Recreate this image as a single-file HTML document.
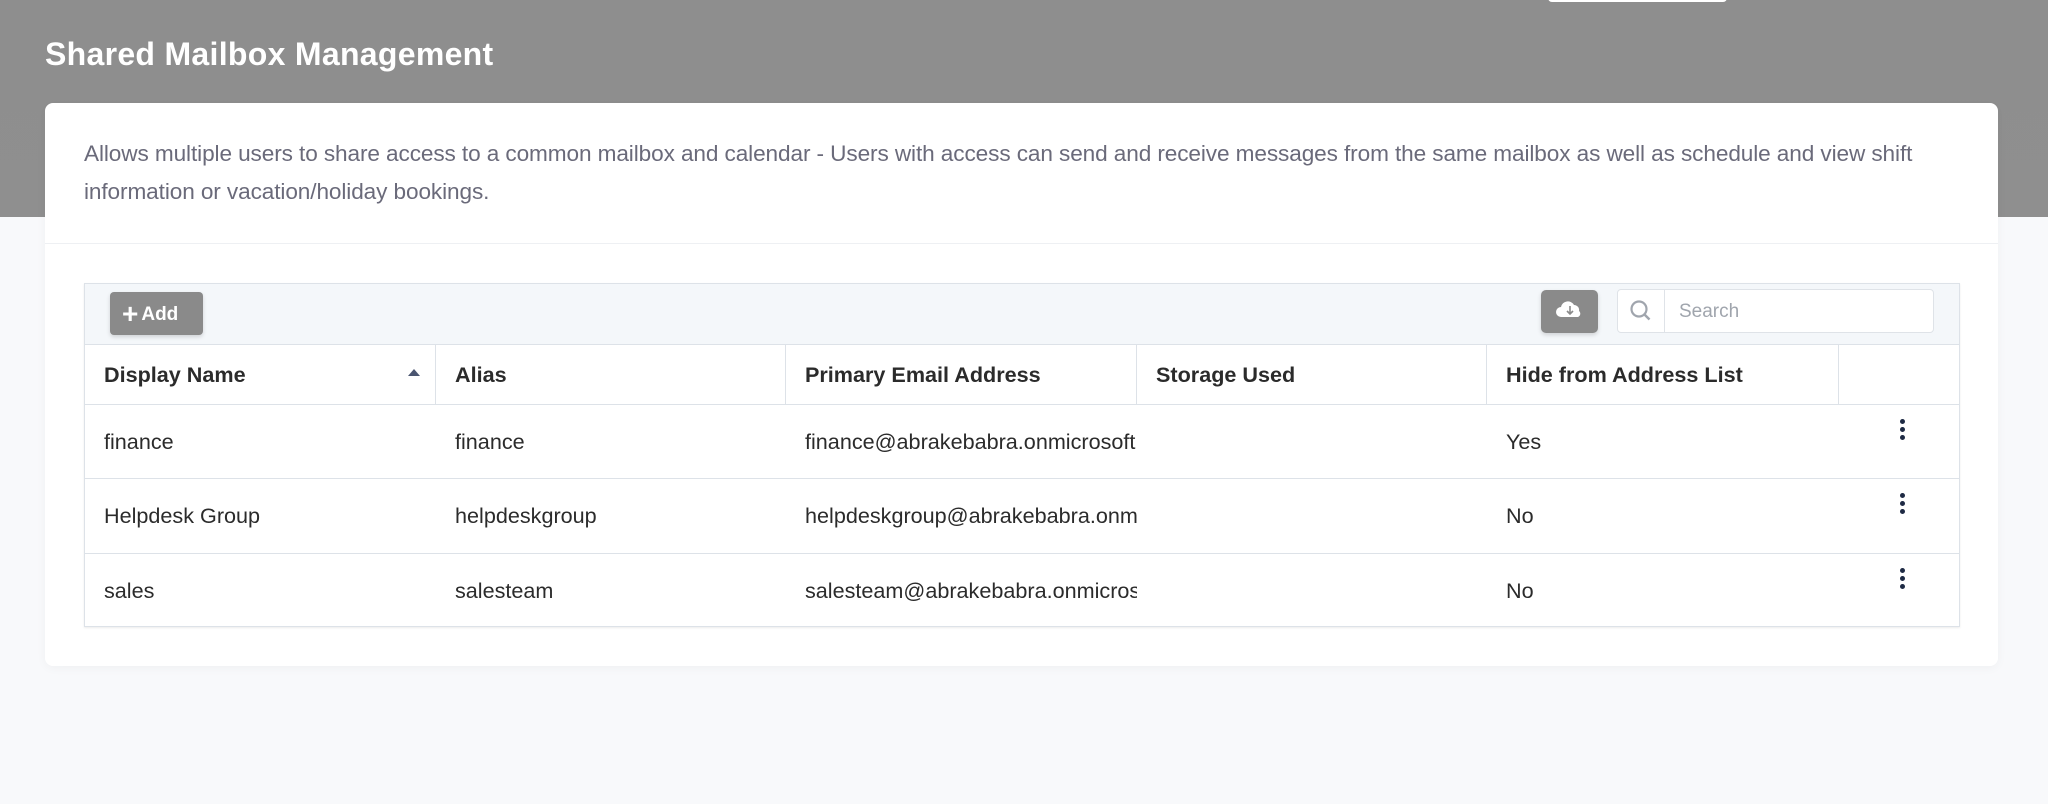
<!DOCTYPE html>
<html><head><meta charset="utf-8"><style>
*{box-sizing:border-box;margin:0;padding:0}
body{width:2048px;height:804px;background:#f8f9fb;font-family:"Liberation Sans",sans-serif;position:relative;overflow:hidden}
.hdr{position:absolute;left:0;top:0;width:2048px;height:217px;background:linear-gradient(#8e8e8e,#8f8f8f)}
.topw{position:absolute;left:1548px;top:-6px;width:179px;height:8px;background:#fff;border-radius:4px}
h1{position:absolute;left:45px;top:36px;color:#fff;font-size:32px;font-weight:bold;letter-spacing:0.3px}
.card{position:absolute;left:45px;top:103px;width:1953px;height:563px;background:#fff;border-radius:8px;box-shadow:0 2px 10px rgba(0,0,0,.04)}
.desc{position:absolute;left:39px;top:32px;width:1880px;color:#6a6a7a;font-size:22.6px;line-height:38px;font-weight:300;letter-spacing:-0.1px}
.div{position:absolute;left:0;top:140px;width:1953px;height:1px;background:#eef0f3}
.tbl{position:absolute;left:39px;top:180px;width:1876px;height:344px;border:1px solid #dde2e8;box-shadow:0 1px 2px rgba(0,0,0,.08)}
.tb{position:absolute;left:0;top:0;width:100%;height:61px;background:#f4f7fa;border-bottom:1px solid #dde2e8}
.add{position:absolute;left:25px;top:8px;width:93px;height:43px;background:#8a8a8a;border-radius:4px;color:#fff;font-weight:bold;font-size:19px;line-height:43px;padding-left:12px;box-shadow:0 2px 4px rgba(0,0,0,.15)}
.add b{font-size:28px;vertical-align:-3px;margin-right:3px;font-weight:bold}
.cl{position:absolute;left:1456px;top:6px;width:57px;height:43px;background:#8a8a8a;border-radius:5px;box-shadow:0 2px 4px rgba(0,0,0,.15)}
.srch{position:absolute;left:1532px;top:5px;width:317px;height:44px;background:#fff;border:1px solid #dfe3e8;border-radius:4px}
.srch .ic{position:absolute;left:0;top:0;width:47px;height:42px;border-right:1px solid #dfe3e8}
.srch span{position:absolute;left:61px;top:11px;color:#a0a5ad;font-size:19px}
.row{position:absolute;left:0;width:100%;border-bottom:1px solid #dde2e8}
.c{position:absolute;top:0;height:100%;font-size:21.6px;color:#2b2b2b;padding-left:19px;display:flex;align-items:center;white-space:nowrap;overflow:hidden}
.h .c{font-weight:bold;border-right:1px solid #dde2e8}
.k{position:absolute;left:1815px;width:6px}
.k i{display:block;width:5px;height:5px;border-radius:50%;background:#1e2a44;margin-bottom:3px}
</style></head><body>
<div class="hdr"></div><div class="topw"></div>
<h1>Shared Mailbox Management</h1>
<div class="card">
<div class="desc">Allows multiple users to share access to a common mailbox and calendar - Users with access can send and receive messages from the same mailbox as well as schedule and view shift<br>information or vacation/holiday bookings.</div>
<div class="div"></div>
<div class="tbl">
<div class="tb">
<div class="add"><b>+</b>Add</div>
<div class="cl"><svg width="57" height="43" viewBox="0 0 57 43"><path d="M20 27a5 5 0 0 1 0-10a7 7 0 0 1 13-2a5 5 0 0 1 5 6a3.5 3.5 0 0 1-1 6z" fill="#fff"/><path d="M29 16v8M26 21l3 3l3-3" stroke="#8a8a8a" stroke-width="1.6" fill="none"/></svg></div>
<div class="srch"><div class="ic"><svg width="47" height="42" viewBox="0 0 47 42"><circle cx="21" cy="19" r="7.5" stroke="#a0a5ad" stroke-width="2.2" fill="none"/><path d="M26.5 24.5l5 5" stroke="#a0a5ad" stroke-width="2.5"/></svg></div><span>Search</span></div>
</div>
<div class="row h" style="top:61px;height:60px">
<div class="c" style="left:0;width:351px">Display Name<svg style="position:absolute;left:322px;top:23px" width="14" height="10"><path d="M1 8L7 1L13 8z" fill="#4a5570"/></svg></div>
<div class="c" style="left:351px;width:350px">Alias</div>
<div class="c" style="left:701px;width:351px">Primary Email Address</div>
<div class="c" style="left:1052px;width:350px">Storage Used</div>
<div class="c" style="left:1402px;width:352px">Hide from Address List</div>
</div>
<div class="row" style="top:121px;height:74px">
<div class="c" style="left:0">finance</div><div class="c" style="left:351px">finance</div>
<div class="c" style="left:701px;width:351px">finance@abrakebabra.onmicrosoft.com</div>
<div class="c" style="left:1402px">Yes</div><div class="k" style="top:14px"><i></i><i></i><i></i></div>
</div>
<div class="row" style="top:195px;height:75px">
<div class="c" style="left:0">Helpdesk Group</div><div class="c" style="left:351px">helpdeskgroup</div>
<div class="c" style="left:701px;width:351px">helpdeskgroup@abrakebabra.onmicrosoft.com</div>
<div class="c" style="left:1402px">No</div><div class="k" style="top:14px"><i></i><i></i><i></i></div>
</div>
<div class="row" style="top:270px;height:73px;border-bottom:none">
<div class="c" style="left:0">sales</div><div class="c" style="left:351px">salesteam</div>
<div class="c" style="left:701px;width:351px">salesteam@abrakebabra.onmicrosoft.com</div>
<div class="c" style="left:1402px">No</div><div class="k" style="top:14px"><i></i><i></i><i></i></div>
</div>
</div>
</div>
</body></html>
